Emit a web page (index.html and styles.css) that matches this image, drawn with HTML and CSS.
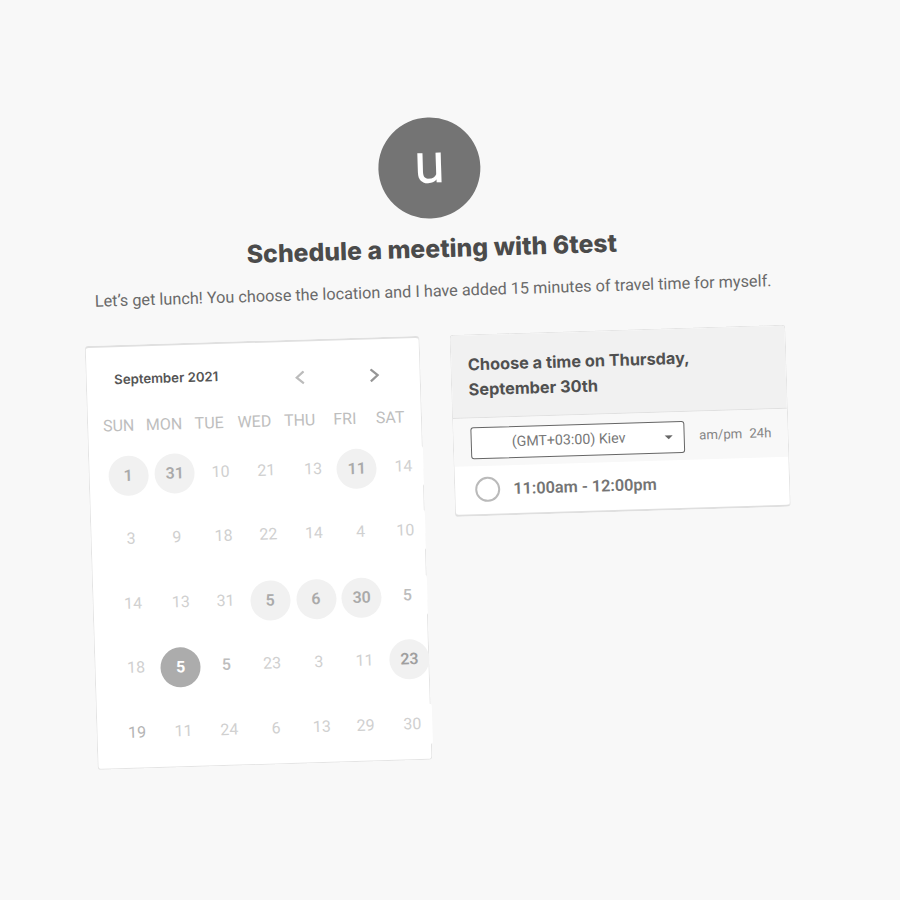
FILE: index.html
```html
<!DOCTYPE html>
<html lang="en">
<head>
<meta charset="utf-8">
<title>Schedule a meeting</title>
<link rel="stylesheet" href="styles.css">
</head>
<body>
<main class="page">
  <div class="avatar"><span>u</span></div>
  <h1 class="title"><span>Schedule a meeting with 6test</span></h1>
  <p class="subtitle"><span>Let’s get lunch! You choose the location and I have added 15 minutes of travel time for myself.</span></p>
  <div class="columns">
    <section class="calendar">
      <header class="month">
        <span class="month-name">September 2021</span>
        <svg class="arrow prev" viewBox="0 0 10 14"><path d="M9 1 L2 7 L9 13"/></svg>
        <svg class="arrow next" viewBox="0 0 10 14"><path d="M1 1 L8 7 L1 13"/></svg>
      </header>
      <div class="weekdays"><span>SUN</span><span>MON</span><span>TUE</span><span>WED</span><span>THU</span><span>FRI</span><span>SAT</span></div>
      <div class="days">
        <span class="open low left">1</span><span class="open">31</span><span>10</span><span>21</span><span class="right-s">13</span><span class="open low left">11</span><span>14</span>
        <span>3</span><span>9</span><span class="right-s">18</span><span>22</span><span>14</span><span class="right-s">4</span><span>10</span>
        <span>14</span><span class="right">13</span><span class="right-s">31</span><span class="open low">5</span><span class="open low">6</span><span class="open low">30</span><span class="mid">5</span>
        <span class="right-s">18</span><span class="selected low">5</span><span class="mid">5</span><span>23</span><span class="right-s">3</span><span class="right-s">11</span><span class="open strong">23</span>
        <span class="dark">19</span><span class="right-s">11</span><span class="right-s">24</span><span class="right">6</span><span class="right">13</span><span>29</span><span class="right-s">30</span>
      </div>
    </section>
    <section class="times">
      <h2 class="times-head">Choose a time on Thursday,<br>September 30th</h2>
      <div class="zone">
        <div class="select"><span>(GMT+03:00) Kiev</span><i class="caret"></i></div>
        <div class="formats"><span>am/pm</span><span>24h</span></div>
      </div>
      <div class="slot"><i class="radio"></i><span class="slot-text">11:00am - 12:00pm</span></div>
    </section>
  </div>
</main>
</body>
</html>
```
FILE: styles.css
```css
* { box-sizing: border-box; }
html { background: #f8f8f8; overflow: hidden; }
body { margin: 0; height: 900px; overflow: hidden; font-family: Roboto, sans-serif; }
.page {
  width: 900px; height: 900px; padding: 116.5px 111.5px 0 87.5px;
  transform: rotate(-1.75deg); transform-origin: 450px 450px;
}
.avatar {
  width: 102px; height: 101.5px; margin: 0 auto; border-radius: 50%;
  background: #747474; color: #fff; display: flex; align-items: center; justify-content: center;
  font-size: 56px; line-height: 60px;
}
.avatar span { margin-top: -9px; }
.title {
  margin: 15px 0 0; height: 30px; text-align: center; white-space: nowrap;
  font: 800 24.8px/30px Inter, sans-serif; color: #4b4b4b;
}
.subtitle {
  margin: 18px 0 0; height: 20px; text-align: center; white-space: nowrap;
  font-size: 16.25px; line-height: 20px; color: #6a6a6a;
}
.columns { display: flex; justify-content: space-between; align-items: flex-start; margin-top: 33.5px; }
.calendar {
  width: 335.5px; height: 424.5px; background: #fff; border: 1px solid #e4e4e4;
  border-top: 2px solid #e0e0e0; border-radius: 4px;
}
.month { display: flex; height: 69px; padding: 21px 0 0 28px; }
.month-name { width: 180px; font: 600 13.2px/22px Inter, sans-serif; color: #555; }
.arrow { width: 10px; height: 14px; margin-top: 8.5px; fill: none; stroke-width: 2.2; }
.prev { stroke: #bcbcbc; }
.next { stroke: #969696; margin-left: 65px; }
.weekdays {
  display: grid; grid-template-columns: repeat(7, 45.25px); margin-left: 8.5px; height: 18px;
  font-size: 16px; line-height: 20px; text-align: center; color: #bebebe;
}
.days {
  display: grid; grid-template-columns: repeat(7, 40px); grid-auto-rows: 40px; gap: 24.5px 5.75px;
  margin: 21px 0 0 20px; width: 320px;
}
.days span {
  background: #fff; border-radius: 2px; text-align: center; font-size: 16px; line-height: 40px; color: #d0d0d0;
}
.days .open { background: #f1f1f1; border-radius: 50%; color: #aaa; font-weight: 600; }
.days .selected { background: #acacac; border-radius: 50%; color: #fff; font-weight: 700; }
.days .strong { color: #9f9f9f; }
.days .mid { color: #bdbdbd; font-weight: 500; }
.days .dark { color: #b4b4b4; }
.days .low { transform: translateY(1px); }
.days .low.left { transform: translate(-1px, 1px); }
.days .right { transform: translateX(2px); }
.days .right-s { transform: translateX(1px); }
.times {
  width: 335.5px; height: 182.5px; background: #fff; border: 1px solid #e4e4e4;
  border-bottom: 2px solid #dfdfdf; border-radius: 4px; overflow: hidden;
}
.times-head {
  margin: 0; height: 83px; padding: 17px 16.5px; background: #f1f1f1; border-bottom: 1px solid #e0e0e0;
  font: 650 16.3px/25px Inter, sans-serif; color: #505050; white-space: nowrap;
}
.zone { height: 48px; padding: 9px 0 0 17px; background: #f8f8f8; display: flex; }
.select {
  flex: none; width: 213.5px; height: 32px; border: 1px solid #666; border-radius: 3px; background: #fff;
  display: flex; align-items: center; padding-left: 40px; font-size: 14.2px; line-height: 28px; color: #777;
}
.select span { margin-top: -1px; }
.caret { margin-left: 39px; border: 4px solid transparent; border-top-color: #666; border-bottom: 0; }
.formats { display: flex; gap: 7px; margin-left: 15px; font-size: 13.2px; line-height: 30px; color: #858585; }
.slot { height: 48.5px; display: flex; align-items: center; padding-left: 20px; }
.radio { width: 25px; height: 25px; border: 2px solid #bababa; border-radius: 50%; }
.slot-text { margin: -1px 0 0 13px; font-size: 16.3px; font-weight: 600; color: #747474; white-space: nowrap; }
```
